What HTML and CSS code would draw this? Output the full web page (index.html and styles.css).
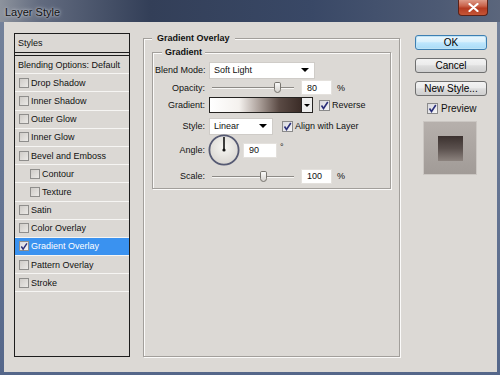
FILE: index.html
```html
<!DOCTYPE html>
<html>
<head>
	<meta charset="utf-8">
	<title>Layer Style</title>
	<link rel="stylesheet" href="styles.css">
</head>
<body>
	<div class="window">
		<div class="titlebar">
			<span class="title">Layer Style</span>
			<div class="close">
				<svg width="11" height="9" viewBox="0 0 11 9"><path d="M1.5 1 L9.5 8 M9.5 1 L1.5 8" stroke="#fff" stroke-width="2.2" stroke-linecap="round"/></svg>
			</div>
		</div>
		<div class="dialog">
			<div class="styleList">
				<div class="item head">Styles</div>
				<div class="item blendOpt">Blending Options: Default</div>
				<div class="item"><span class="chk"></span>Drop Shadow</div>
				<div class="item"><span class="chk"></span>Inner Shadow</div>
				<div class="item"><span class="chk"></span>Outer Glow</div>
				<div class="item"><span class="chk"></span>Inner Glow</div>
				<div class="item"><span class="chk"></span>Bevel and Emboss</div>
				<div class="item sub"><span class="chk"></span>Contour</div>
				<div class="item sub"><span class="chk"></span>Texture</div>
				<div class="item"><span class="chk"></span>Satin</div>
				<div class="item"><span class="chk"></span>Color Overlay</div>
				<div class="item sel"><span class="chk on"><svg width="9" height="9" viewBox="0 0 9 9"><path d="M1.5 4.5 L3.5 7.5 L7.8 1" fill="none" stroke="#2a2f7a" stroke-width="1.6"/></svg></span>Gradient Overlay</div>
				<div class="item"><span class="chk"></span>Pattern Overlay</div>
				<div class="item"><span class="chk"></span>Stroke</div>
			</div>

			<fieldset class="group outer">
				<legend>Gradient Overlay</legend>
				<fieldset class="group inner">
					<legend>Gradient</legend>
					<div class="row">
						<span class="lbl">Blend Mode:</span>
						<div class="select blendSel">Soft Light<i class="arrow"></i></div>
					</div>
					<div class="row rowOpacity">
						<span class="lbl">Opacity:</span>
						<div class="slider"><span class="thumb" style="left: 79%;"></span></div>
						<div class="num">80</div>
						<span class="unit">%</span>
					</div>
					<div class="row">
						<span class="lbl">Gradient:</span>
						<div class="gradBox">
							<div class="grad"></div>
							<div class="gradArrow"><i class="arrow small"></i></div>
						</div>
						<div class="check"><span class="chk on light"><svg width="9" height="9" viewBox="0 0 9 9"><path d="M1.5 4.5 L3.5 7.5 L7.8 1" fill="none" stroke="#2a2f7a" stroke-width="1.6"/></svg></span>Reverse</div>
					</div>
					<div class="row rowStyle">
						<span class="lbl">Style:</span>
						<div class="select styleSel">Linear<i class="arrow"></i></div>
						<div class="check wide"><span class="chk on light"><svg width="9" height="9" viewBox="0 0 9 9"><path d="M1.5 4.5 L3.5 7.5 L7.8 1" fill="none" stroke="#2a2f7a" stroke-width="1.6"/></svg></span>Align with Layer</div>
					</div>
					<div class="row rowAngle">
						<span class="lbl">Angle:</span>
						<svg class="dial" width="32" height="32" viewBox="0 0 32 32">
							<defs>
								<radialGradient id="dialFill" cx="50%" cy="40%" r="60%">
									<stop offset="0" stop-color="#f7f6f3"/>
									<stop offset="1" stop-color="#d9d6d1"/>
								</radialGradient>
							</defs>
							<circle cx="16" cy="16" r="14.6" fill="url(#dialFill)" stroke="#565a73" stroke-width="1.8"/>
							<line x1="16" y1="16" x2="16" y2="3" stroke="#111" stroke-width="1.6"/>
							<circle cx="16" cy="16" r="1.6" fill="#111"/>
						</svg>
						<div class="num angleNum">90</div>
						<span class="deg">°</span>
					</div>
					<div class="row rowScale">
						<span class="lbl">Scale:</span>
						<div class="slider"><span class="thumb" style="left: 62%;"></span></div>
						<div class="num">100</div>
						<span class="unit">%</span>
					</div>
				</fieldset>
			</fieldset>

			<div class="side">
				<button class="btn ok">OK</button>
				<button class="btn">Cancel</button>
				<button class="btn">New Style...</button>
				<div class="previewCheck"><span class="chk on light"><svg width="9" height="9" viewBox="0 0 9 9"><path d="M1.5 4.5 L3.5 7.5 L7.8 1" fill="none" stroke="#2a2f7a" stroke-width="1.6"/></svg></span>Preview</div>
				<div class="swatch"><div class="swatchInner"></div></div>
			</div>
		</div>
	</div>
</body>
</html>
```

FILE: styles.css
```css
body {
	margin: 0;
	font-family: "Liberation Sans", Arial, sans-serif;
	background-color: #5b6c8b;
}
.window {
	width: 500px;
	height: 375px;
	display: flex;
	flex-direction: column;
	background: linear-gradient(180deg, #75839b, #55678a);
}
.titlebar {
	height: 22px;
	flex: none;
	display: flex;
	align-items: flex-start;
	background: linear-gradient(90deg, #8d939d 0, #626b7f 8%, #333f58 30%, #394866 62%, #4d5a74 88%, #5b667c 100%);
}
.title {
	font-size: 11px;
	padding: 6px 0 0 5px;
	color: #111;
	text-shadow: 0 0 4px #c6cad2, 0 0 2px #c6cad2;
}
.close {
	margin-left: auto;
	margin-right: 12px;
	width: 30px;
	height: 16px;
	box-sizing: border-box;
	border: 1px solid #5c2218;
	border-top: 0 none;
	border-radius: 0 0 4px 4px;
	background: linear-gradient(180deg, #dd9a88 0, #c9624a 40%, #b53b22 55%, #c65636 100%);
	display: flex;
	align-items: center;
	justify-content: center;
}
.dialog {
	flex: 1;
	margin: 0 3px 3px 4px;
	padding: 11px 0 0 10px;
	box-sizing: border-box;
	background-color: #dcd9d5;
	display: flex;
	align-items: flex-start;
	font-size: 9px;
	color: #111;
}

/* styles list */
.styleList {
	width: 116px;
	height: 324px;
	flex: none;
	box-sizing: border-box;
	border: 1px solid #1d1d1d;
	background-color: #dbd8d4;
}
.item {
	height: 18.2px;
	box-sizing: border-box;
	border-bottom: 1px solid #f6f5f3;
	display: flex;
	align-items: center;
	padding-left: 4px;
	white-space: nowrap;
}
.item.head {
	height: 22px;
	padding-left: 3px;
	border-bottom: 4px double #1d1d1d;
}
.item.blendOpt {
	padding-left: 3px;
}
.item.sub {
	padding-left: 15px;
}
.item.sel {
	background-color: #3a92f0;
	color: #fff;
}
.chk {
	width: 10px;
	height: 10px;
	flex: none;
	box-sizing: border-box;
	margin-right: 2px;
	border: 1px solid #8f8e8c;
	background: linear-gradient(135deg, #cfccc8, #ebe9e6);
	display: flex;
	align-items: center;
	justify-content: center;
}
.chk.on {
	background: linear-gradient(135deg, #d8d8de, #f6f6f8);
}
.chk svg {
	display: block;
}

/* group boxes */
.group {
	margin: 0;
	border: 1px solid #a29f9b;
	box-shadow: inset 1px 1px 0 #fbfaf9, 1px 1px 0 #fbfaf9;
	box-sizing: border-box;
	min-width: 0;
}
.group > legend {
	font-weight: bold;
	line-height: 11px;
	background-color: #dcd9d5;
}
.outer {
	margin-left: 13px;
	width: 257px;
	height: 324px;
	flex: none;
	padding: 3px 8px 0 8px;
}
.outer > legend {
	padding: 0 5px;
}
.inner {
	padding: 3px 0 3px 2px;
}
.inner > legend {
	margin-left: 7px;
	padding: 0 3px;
}

/* rows */
.row {
	height: 18px;
	display: flex;
	align-items: center;
	white-space: nowrap;
}
.rowOpacity {
	height: 17px;
}
.rowStyle {
	margin-top: 3px;
}
.rowAngle {
	height: 30px;
}
.rowScale {
	margin-top: 2px;
}
.lbl {
	width: 50px;
	flex: none;
	text-align: right;
	margin-right: 4px;
}
.select {
	height: 17px;
	box-sizing: border-box;
	border: 1px solid #cfccc8;
	background-color: #fff;
	display: flex;
	align-items: center;
	padding-left: 4px;
}
.blendSel {
	width: 106px;
}
.styleSel {
	width: 64px;
}
.arrow {
	margin-left: auto;
	margin-right: 5px;
	width: 0;
	height: 0;
	border-left: 4px solid transparent;
	border-right: 4px solid transparent;
	border-top: 4px solid #000;
}
.arrow.small {
	margin: 0;
	border-left-width: 3px;
	border-right-width: 3px;
	border-top-width: 3px;
}
.slider {
	width: 82px;
	height: 11px;
	margin-left: 3px;
	position: relative;
}
.slider::before {
	content: "";
	position: absolute;
	left: 0;
	right: 0;
	top: 5px;
	height: 1px;
	background-color: #8d8a86;
	border-bottom: 1px solid #f7f6f4;
}
.thumb {
	position: absolute;
	top: 0;
	width: 7px;
	height: 11px;
	margin-left: -3px;
	box-sizing: border-box;
	border: 1px solid #77746f;
	border-radius: 2px 2px 4px 4px;
	background: linear-gradient(180deg, #fbfbfa, #d4d1cd);
}
.num {
	width: 31px;
	height: 15px;
	margin-left: 7px;
	box-sizing: border-box;
	border: 1px solid #e4e1dd;
	background-color: #fff;
	display: flex;
	align-items: center;
	padding-left: 5px;
}
.unit {
	margin-left: 5px;
}
.gradBox {
	width: 104px;
	height: 16px;
	box-sizing: border-box;
	border: 1px solid #252321;
	display: flex;
}
.grad {
	flex: 1;
	background: linear-gradient(90deg, #ffffff 0, #f4f1ee 32%, #a89c96 55%, #5b4b45 76%, #3b2c27 100%);
}
.gradArrow {
	width: 10px;
	border-left: 1px solid #252321;
	background-color: #eeeeee;
	display: flex;
	align-items: center;
	justify-content: center;
}
.check {
	display: flex;
	align-items: center;
	margin-left: 6px;
}
.check.wide {
	margin-left: 9px;
}
.check .chk, .previewCheck .chk {
	width: 11px;
	height: 11px;
	border-color: #8a8a8a;
}
.dial {
	margin-left: -1px;
	flex: none;
}
.angleNum {
	width: 34px;
	margin-left: 3px;
}
.deg {
	margin-left: 3px;
	align-self: flex-start;
	margin-top: 7px;
}

/* right side */
.side {
	width: 72px;
	flex: none;
	margin-left: 15px;
	padding-top: 2px;
	display: flex;
	flex-direction: column;
}
.btn {
	height: 15px;
	padding: 0;
	margin: 0 0 8px 0;
	box-sizing: border-box;
	border: 1px solid #6f6f6f;
	border-radius: 3px;
	background: linear-gradient(180deg, #f3f3f3 0, #ebebeb 45%, #dddddd 52%, #cfcfcf 100%);
	font-family: "Liberation Sans", Arial, sans-serif;
	font-size: 10px;
	line-height: 13px;
	color: #000;
}
.btn.ok {
	border-color: #3d7fb2;
	background: linear-gradient(180deg, #eaf6fd 0, #d9f0fc 45%, #bee6fd 52%, #a9dbf6 100%);
	box-shadow: inset 0 0 0 1px #bfe3f5;
}
.previewCheck {
	display: flex;
	align-items: center;
	height: 11px;
	margin: -1px 0 0 12px;
	font-size: 10px;
}
.previewCheck .chk {
	margin-right: 3px;
}
.swatch {
	width: 54px;
	height: 54px;
	margin: 7px 0 0 8px;
	box-sizing: border-box;
	border: 1px solid #cbc7c3;
	background: linear-gradient(180deg, #b6b0ac, #a19b97);
	display: flex;
	align-items: center;
	justify-content: center;
}
.swatchInner {
	width: 25px;
	height: 25px;
	background: linear-gradient(180deg, #3b312f 0, #5a504d 50%, #8c837e 100%);
}
```
